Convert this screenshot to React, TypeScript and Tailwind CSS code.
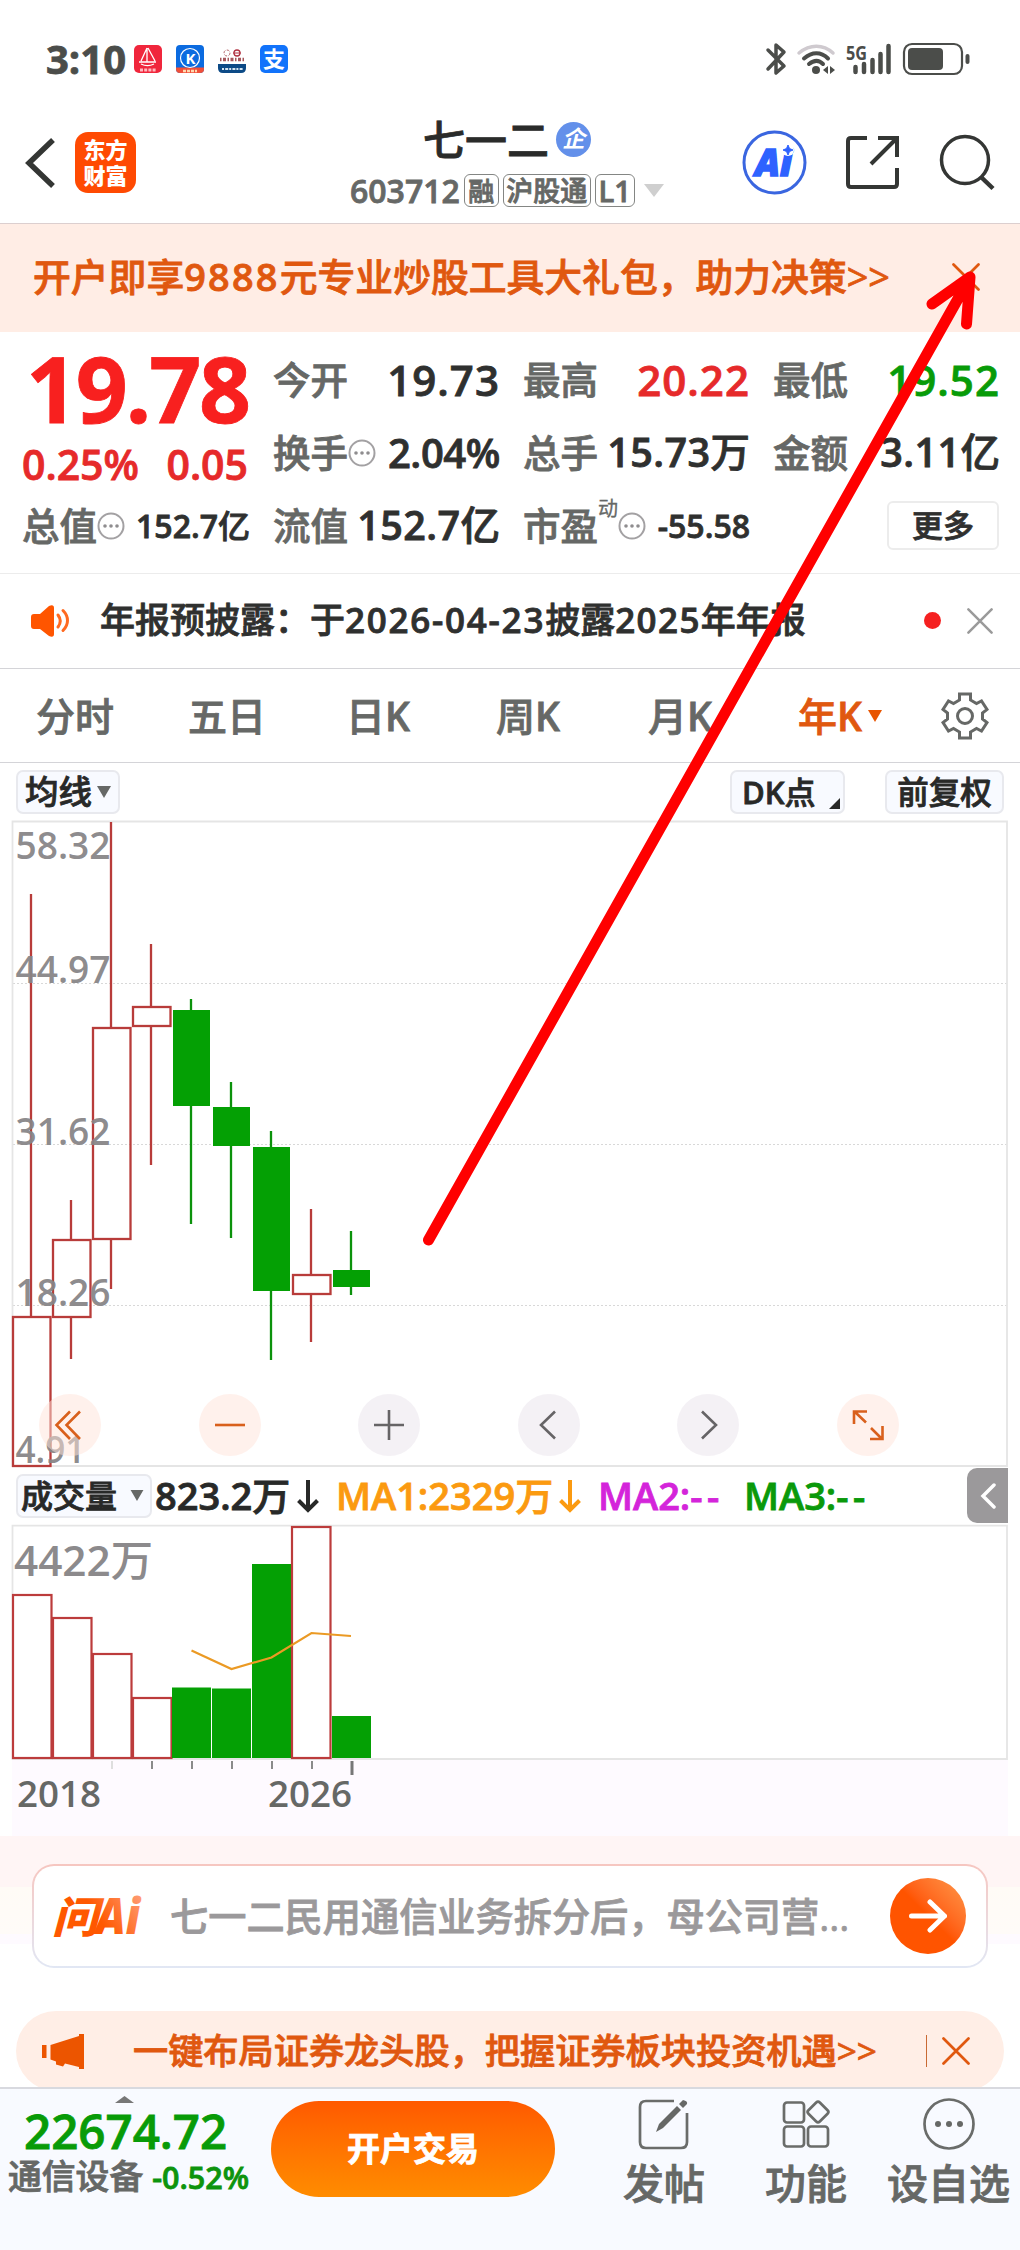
import type { ReactNode } from "react";

const candles = [
    { x: 13, high: 894, top: 1317, bottom: 1466, low: 1466, up: true },
    { x: 53, high: 1200, top: 1240, bottom: 1317, low: 1359, up: true },
    { x: 93, high: 822, top: 1028, bottom: 1239, low: 1289, up: true },
    { x: 133, high: 944, top: 1007, bottom: 1026, low: 1165, up: true },
    { x: 173, high: 999, top: 1010, bottom: 1106, low: 1224, up: false },
    { x: 213, high: 1082, top: 1107, bottom: 1146, low: 1238, up: false },
    { x: 253, high: 1131, top: 1147, bottom: 1291, low: 1360, up: false },
    { x: 293, high: 1209, top: 1275, bottom: 1294, low: 1342, up: true },
    { x: 333, high: 1231, top: 1270, bottom: 1287, low: 1295, up: false },
];

const volumes = [
    { x: 13, top: 1595, up: true },
    { x: 53, top: 1618, up: true },
    { x: 93, top: 1654, up: true },
    { x: 133, top: 1698, up: true },
    { x: 172, top: 1687.5, up: false },
    { x: 212, top: 1688.5, up: false },
    { x: 252, top: 1564, up: false },
    { x: 292, top: 1527, up: true },
    { x: 332, top: 1716, up: false },
];

const prices = [
    { label: "58.32", y: 859, w: 95 },
    { label: "44.97", y: 983, w: 95 },
    { label: "31.62", y: 1145, w: 95 },
    { label: "18.26", y: 1306, w: 95 },
    { label: "4.91", y: 1463, w: 70 },
];

const Close = ({ className }: { className: string }) => (
    <svg viewBox="0 0 28 28" className={className} fill="none" stroke="currentColor" strokeWidth="2.7" strokeLinecap="round">
        <path d="M1.5 1.5 26.5 26.5M26.5 1.5 1.5 26.5" />
    </svg>
);

const Info = () => (
    <svg viewBox="0 0 28 28" className="w-7 h-7 shrink-0" fill="none" stroke="#a3a1a3" strokeWidth="2">
        <circle cx="14" cy="14" r="12.5" />
        <g fill="#8f8d8f" stroke="none">
            <circle cx="8" cy="14" r="1.8" />
            <circle cx="14" cy="14" r="1.8" />
            <circle cx="20" cy="14" r="1.8" />
        </g>
    </svg>
);

const DownArrow = ({ className }: { className: string }) => (
    <svg viewBox="0 0 22 34" className={className} fill="none" stroke="currentColor" strokeWidth="4">
        <path d="M11 1V31M1.5 21.5 11 31l9.5-9.5" />
    </svg>
);

function StatusBar() {
    return (
        <div className="flex h-[90px] items-center pt-[28px] pl-[46px] pr-[45px] text-[#4b4d4a]">
            <span className="w-[88px] text-[40px] font-bold leading-none">3:10</span>
            <div className="flex gap-[14px]">
                <svg viewBox="0 0 28 28" className="w-7 h-7">
                    <rect width="28" height="28" rx="5" fill="#f0263c" />
                    <path d="M13 3v14M13 3 7 16M14 3l7 13M5 17h17M7 19c4 2 9 2 13 0" fill="none" stroke="#fff" strokeWidth="1.3" />
                    <path d="M6 25h16" stroke="#ffb9bf" strokeWidth="3" strokeDasharray="3 1.2" />
                </svg>
                <svg viewBox="0 0 28 28" className="w-7 h-7">
                    <rect width="28" height="28" rx="4" fill="#0b6be0" />
                    <path d="M0 22.5h28V24q0 4-4 4H4q-4 0-4-4z" fill="#f0503a" />
                    <circle cx="14" cy="13" r="9.5" fill="none" stroke="#fff" strokeWidth="1.2" />
                    <text x="14.500" y="18.500" fontSize="15" fontWeight="700" textAnchor="middle" fill="#fff">K</text>
                    <path d="M7 26h14" stroke="#ffd9b0" strokeWidth="2.5" strokeDasharray="3 1" />
                </svg>
                <svg viewBox="0 0 28 28" className="w-7 h-7">
                    <path d="M0 19h28v4q0 5-5 5H5q-5 0-5-5z" fill="#0c4a86" />
                    <path d="M4 24h21" stroke="#d5e4f0" strokeWidth="2.2" strokeDasharray="2 1.2 3 1" />
                    <path d="M2 14.500h25" stroke="#a5565b" strokeWidth="3.5" strokeDasharray="1.5 1.500 3 1.500" />
                    <circle cx="9" cy="8" r="3" fill="none" stroke="#b4666b" strokeDasharray="3 1.5" />
                    <circle cx="19" cy="8" r="3" fill="none" stroke="#b03040" strokeWidth="1.3" />
                    <path d="M15 8h8" stroke="#b03040" />
                </svg>
                <span className="w-7 h-7 rounded-[5px] bg-[#1273fb] text-white text-[22px] font-bold leading-[27px] text-center [-webkit-text-stroke:0]">支</span>
            </div>
            <svg viewBox="765 42 210 34" className="ml-auto w-[210px] h-[34px] overflow-visible" fill="none" stroke="#4b4d4a">
                <path d="m768 50 16 16-8 7V45l8 7-16 17" strokeWidth="3.5" strokeLinejoin="round" strokeLinecap="round" />
                <path d="M799 53c11-9 24-9 34 0" stroke="#cfcacf" strokeWidth="3.5" strokeLinecap="round" />
                <path d="M804 58.5c8-7 17-7 24 0M809 64c5-4 10-4 14 0" strokeWidth="4" strokeLinecap="round" />
                <circle cx="816" cy="70" r="4" fill="#4b4d4a" stroke="none" />
                <path d="m828 66-5 4 5 4zM830 66l5 4-5 4z" fill="#4b4d4a" stroke="none" />
                <text x="846" y="59.5" fontSize="20" fontWeight="700" textLength="21" lengthAdjust="spacingAndGlyphs" fill="#4b4d4a" stroke="none">5G</text>
                <path d="M855.500 67v5M864 64v8M872.5 60v12M880.5 54v18M888.5 46v26" strokeWidth="4.5" strokeLinecap="round" />
                <rect x="904" y="44" width="58" height="30" rx="8" strokeWidth="2.2" />
                <rect x="908" y="48" width="35" height="22" rx="4" fill="#4b4d4a" stroke="none" />
                <path d="M967.5 56v6" strokeWidth="4" strokeLinecap="round" />
            </svg>
        </div>
    );
}

function Header() {
    return (
        <header className="flex h-[134px] items-center border-b border-[#dccfcf] pl-[24px] pr-[26px] text-[#2a2b2a]">
            <div className="flex w-[326px] items-center gap-[19px] pt-[12px]">
                <svg viewBox="0 0 32 52" className="w-8 h-[52px]" fill="none" stroke="#343634" strokeWidth="5.5">
                    <path d="M29 3 5 26l24 23" />
                </svg>
                <div className="w-[61px] h-[61px] rounded-[13px] bg-[#ff4a02] text-white text-[22px] font-black leading-[26px] text-center pt-[4px] [-webkit-text-stroke:0]">
                    东方
                    <br />
                    财富
                </div>
            </div>
            <div className="flex flex-col items-center pt-[18px]">
                <div className="flex h-[50px] items-center gap-[7px]">
                    <h1 className="pt-[1px] text-[42px] font-medium leading-none">七一二</h1>
                    <span className="w-[35px] h-[35px] rounded-full bg-[#6390ea] text-white text-[23px] font-bold italic leading-[33px] text-center [-webkit-text-stroke:0]">企</span>
                </div>
                <div className="flex h-[52px] items-center text-[#666866] text-[26px] font-medium leading-none">
                    <span className="mr-[4px] text-[32px] font-semibold">603712</span>
                    <span className="mr-[4px] flex h-[33px] w-[35px] items-center justify-center rounded-[6px] border border-[#848684]">融</span>
                    <span className="mr-[4px] flex h-[33px] w-[88px] items-center justify-center rounded-[6px] border border-[#848684] text-[27px]">沪股通</span>
                    <span className="flex h-[33px] w-[40px] items-center justify-center rounded-[6px] border border-[#848684] text-[29px] font-semibold">L1</span>
                    <svg viewBox="0 0 20 13" className="ml-[9px] w-5 h-[13px]">
                        <path d="M0 0h20L10 13z" fill="#cfcfcf" />
                    </svg>
                </div>
            </div>
            <svg viewBox="742 130 252 66" className="ml-auto w-[252px] h-[66px] mt-[12px] overflow-visible" fill="none" stroke="#343634" strokeWidth="4">
                <circle cx="774.5" cy="162.5" r="30.5" stroke="#3a66e0" strokeWidth="3" />
                <text x="755" y="175.500" fontSize="37" fontWeight="800" fontStyle="italic" textLength="37" lengthAdjust="spacingAndGlyphs" fill="#2e62ff" stroke="#2e62ff" strokeWidth="1.500">Ai</text>
                <circle cx="788" cy="150" r="6" fill="#fff" stroke="none" />
                <path d="m788 145 1.5 3.5L793 150l-3.5 1.5L788 155l-1.5-3.5L783 150l3.5-1.5z" fill="#2e62ff" stroke="#2e62ff" strokeWidth="1" />
                <path d="M867 138h-16q-3 0-3 3v43q0 3 3 3h43q3 0 3-3v-16M878 138h19v19M897 138l-26 26" />
                <circle cx="965" cy="160" r="23.5" strokeWidth="3.5" />
                <path d="m981 177 12 11.5" strokeWidth="4.5" />
            </svg>
        </header>
    );
}

type StatProps = { label: string; value: string; unit?: string; color?: string; info?: boolean; sup?: string; size?: string };

function Stat({ label, value, unit, color = "text-[#2f302f]", info, sup, size = "text-[42px] tracking-[0.025em]" }: StatProps) {
    return (
        <div className="flex items-center whitespace-nowrap">
            <span className="text-[37.5px] font-medium text-[#666866]">{label}</span>
            {sup && <span className="relative -top-[17px] text-[20px] text-[#666866] [-webkit-text-stroke:0.3px]">{sup}</span>}
            {info && <Info />}
            <span className={`ml-auto -mr-[2px] font-semibold ${color} ${size}`}>
                {value}
                {unit && <span className="font-medium tracking-normal">{unit}</span>}
            </span>
        </div>
    );
}

function Quote() {
    const mid = "text-[39.5px] tracking-[0.01em]";
    const small = "text-[32px]";
    return (
        <section className="grid h-[242px] grid-cols-[226px_225px_225px_225px] grid-rows-[73px_73px_73px] gap-x-[25px] border-b border-[#ececec] pl-[22px] pt-[11px] leading-none">
            <div className="row-span-2 text-[#f8201f]">
                <div className="-mt-[3px] h-[96px] pl-[4px] text-[91px] font-bold leading-[96px] tracking-[-0.025em]">19.78</div>
                <div className="flex h-[56px] items-center justify-between text-[41px] font-semibold text-[#e62a2a]">
                    <span>0.25%</span>
                    <span>0.05</span>
                </div>
            </div>
            <Stat label="今开" value="19.73" />
            <Stat label="最高" value="20.22" color="text-[#e62a2a]" />
            <Stat label="最低" value="19.52" color="text-[#089b08]" />
            <Stat label="换手" value="2.04%" info size="text-[40px] tracking-[-0.01em]" />
            <Stat label="总手" value="15.73" unit="万" size={mid} />
            <Stat label="金额" value="3.11" unit="亿" size={mid} />
            <Stat label="总值" value="152.7" unit="亿" info size={small} />
            <Stat label="流值" value="152.7" unit="亿" size={mid} />
            <Stat label="市盈" sup="动" value="-55.58" info size={small} />
            <button className="-mr-[1px] h-[49px] w-[112px] self-center justify-self-end rounded-[6px] border-2 border-[#ececec] text-[31px] font-medium text-[#2f302f]">更多</button>
        </section>
    );
}

function Notice() {
    return (
        <section className="flex h-[95px] items-center border-b border-[#d4d4d8] pl-[29px] pr-[27px] pb-[1px]">
            <svg viewBox="0 0 42 34" className="mr-[29px] w-[42px] h-[34px]" fill="none" stroke="#ff6a20" strokeWidth="3" strokeLinecap="round">
                <path d="M2 13q0-3 3-3h6l9-8q5-2 5 2v26q0 4-5 2l-9-7H5q-3 0-3-3z" fill="#ff5500" stroke="none" />
                <path d="M29 11c3 4 3 8 0 12M34 6.5c6 6 6 14 0 20" />
            </svg>
            <p className="whitespace-nowrap pb-[2px] text-[35px] font-medium leading-none text-[#2f302f]">
                年报预披露：于<span className="font-semibold tracking-[0.05em]">2026-04-23</span>披露<span className="font-semibold tracking-[0.04em]">2025</span>年年报
            </p>
            <span className="ml-auto mr-[26px] w-[17px] h-[17px] rounded-full bg-[#f52020]" />
            <Close className="w-[26px] h-[26px] text-[#9a9a9a]" />
        </section>
    );
}

function Tabs() {
    return (
        <nav className="flex h-[94px] items-center border-b border-[#d4d4d8] pl-[36px] text-[39px] font-medium leading-none text-[#666866]">
            <span className="w-[152px]">分时</span>
            <span className="w-[158px]">五日</span>
            <span className="w-[150px]">日<b className="font-semibold">K</b></span>
            <span className="w-[152px]">周<b className="font-semibold">K</b></span>
            <span className="w-[150px]">月<b className="font-semibold">K</b></span>
            <span className="flex w-[143px] items-center text-[#e0580f]">
                年<b className="mr-[6px] font-semibold">K</b>
                <svg viewBox="0 0 14 12" className="w-[14px] h-3">
                    <path d="M0 0h14L7 12z" fill="#e85500" />
                </svg>
            </span>
            <svg viewBox="0 0 48 48" className="w-12 h-12" fill="none" stroke="#666866" strokeWidth="3">
                <path d="M18.5 2h11v6l6 3.500 5-2.500 5.500 8.500-4.500 3.500v6l4.500 3.500-5.500 8.500-5-2.500-6 3.500v6h-11v-6l-6-3.500-5 2.500L2 30.500 6.500 27v-6L2 17.500 7.500 9l5 2.500 6-3.500z" />
                <circle cx="24" cy="24" r="7.500" />
            </svg>
        </nav>
    );
}

const Chip = ({ className, children }: { className: string; children: ReactNode }) => (
    <button className={`flex h-[44px] items-center rounded-[7px] border-2 border-[#e8e9ee] bg-[#f8faff] font-medium leading-none text-[#282928] ${className}`}>{children}</button>
);

function PriceChart() {
    return (
        <section>
            <div className="flex h-[57px] items-center pl-4 pr-[16px] pt-[1px]">
                <Chip className="w-[104px] gap-[5px] pl-[7px] text-[33.5px]">
                    均线
                    <svg viewBox="0 0 14 12" className="w-[14px] h-3">
                        <path d="M0 0h14L7 12z" fill="#666866" />
                    </svg>
                </Chip>
                <Chip className="ml-auto w-[115px] justify-between pl-[10px] pr-[3px] text-[31px]">
                    <span>
                        <b className="font-semibold">DK</b>点
                    </span>
                    <svg viewBox="0 0 11 11" className="mt-[22px] w-[11px] h-[11px]">
                        <path d="M11 0v11H0z" fill="#282928" />
                    </svg>
                </Chip>
                <Chip className="ml-[40px] w-[119px] justify-center text-[31.5px]">前复权</Chip>
            </div>
            <div className="relative h-[648px]">
                <svg viewBox="0 820 1020 648" className="block h-[648px] w-[1020px] overflow-visible">
                    <g stroke="#d8d8d8" strokeDasharray="2 2">
                        <path d="M13 983.5H1007M13 1144.5H1007M13 1305.5H1007" />
                    </g>
                    <path d="M12.5 821.5V1466H1007V821.5z" fill="none" stroke="#e5e5e5" strokeWidth="1.8" />
                    {candles.map((c) => (
                        <g key={c.x} stroke={c.up ? "#b83c3a" : "#0b920b"} strokeWidth="2.3">
                            <path d={`M${c.x + 18} ${c.high}V${c.top}M${c.x + 18} ${c.bottom}V${c.low}`} />
                            {c.up ? (
                                <rect x={c.x} y={c.top} width="37.5" height={c.bottom - c.top} fill="none" />
                            ) : (
                                <rect x={c.x} y={c.top} width="37" height={c.bottom - c.top} fill="#04a004" stroke="none" />
                            )}
                        </g>
                    ))}
                    <g fill="#878587" fillOpacity="0.94" fontSize="38.5" fontWeight="600">
                        {prices.map((p) => (
                            <text key={p.label} x="15.5" y={p.y} textLength={p.w} lengthAdjust="spacingAndGlyphs">{p.label}</text>
                        ))}
                    </g>
                </svg>
                <div className="absolute left-[39px] right-[121px] top-[574px] flex justify-between">
                    <Control tone="warm" d="M31 17.5 17.5 31 31 45M41 17.5 27.5 31 41 45" />
                    <Control tone="warm" d="M16 31h30" />
                    <Control tone="cool" d="M16 31h30M31 16v30" />
                    <Control tone="cool" d="M37 17.5 23 31l14 13.5" />
                    <Control tone="cool" d="m25 17.5 14 13.5-14 13.5" />
                    <Control tone="warm" d="M17 30V17.5h13M17.5 17.5 29 28.5M34 34l11 11M33 45h12.5V32" />
                </div>
            </div>
        </section>
    );
}

function Control({ tone, d }: { tone: "warm" | "cool"; d: string }) {
    return (
        <button className={`w-[62px] h-[62px] rounded-full ${tone === "warm" ? "bg-[#ffe4d9]/50 text-[#d9601c]" : "bg-[#f0ebf1]/70 text-[#666466]"}`}>
            <svg viewBox="0 0 62 62" className="w-full h-full" fill="none" stroke="currentColor" strokeWidth="2.6">
                <path d={d} />
            </svg>
        </button>
    );
}

function VolumeChart() {
    return (
        <section>
            <div className="flex h-[56px] items-center whitespace-nowrap pl-4 pr-[12px] pb-[1px] text-[38px] font-semibold leading-none">
                <Chip className="w-[136px] gap-[13px] pl-[3px] text-[32px]">
                    成交量
                    <svg viewBox="0 0 14 12" className="w-[14px] h-[11px]">
                        <path d="M0 0h14L7 12z" fill="#666866" />
                    </svg>
                </Chip>
                <span className="ml-[3px] w-[142px] pb-[2px] text-[#282928]">
                    823.2<span className="font-medium">万</span>
                </span>
                <DownArrow className="w-[22px] h-[34px] text-[#282928]" />
                <span className="ml-[17px] w-[223px] pb-[2px] text-[#fb9a10]">
                    MA1:2329<span className="font-medium">万</span>
                </span>
                <DownArrow className="w-[22px] h-[34px] text-[#fb9a10]" />
                <span className="ml-[17px] w-[146px] pb-[2px] text-[#d424da]">
                    MA2:<span className="tracking-[0.12em]">--</span>
                </span>
                <span className="pb-[2px] text-[#0a990a]">
                    MA3:<span className="tracking-[0.12em]">--</span>
                </span>
                <span className="ml-auto flex h-[55px] w-[41px] items-center justify-center rounded-l-[10px] bg-[#9b999b]">
                    <svg viewBox="0 0 16 26" className="w-4 h-[26px]" fill="none" stroke="#fff" strokeWidth="3.5" strokeLinecap="round">
                        <path d="M14 2 3 13l11 11" />
                    </svg>
                </span>
            </div>
            <svg viewBox="0 1524 1020 312" className="block h-[312px] w-[1020px]">
                <rect x="12" y="1760" width="996" height="76" fill="#fefaff" />
                <path d="M12.5 1525.7V1759H1007V1525.7z" fill="none" stroke="#e5e5e5" strokeWidth="1.8" />
                {volumes.map((v) =>
                    v.up ? (
                        <rect key={v.x} x={v.x} y={v.top} width="38.5" height={1758 - v.top} fill="none" stroke="#bc3c3c" strokeWidth="2.2" />
                    ) : (
                        <rect key={v.x} x={v.x} y={v.top} width="39" height={1758 - v.top} fill="#04a004" />
                    )
                )}
                <path d="m191.5 1650.5 40 18.5 40-11.5 40-24.5 39.5 3" fill="none" stroke="#eb9a24" strokeWidth="2.2" />
                <text x="14" y="1576" fontSize="42" fontWeight="600" textLength="139" lengthAdjust="spacingAndGlyphs" fill="#8c8a8c">
                    4422<tspan fontWeight="500">万</tspan>
                </text>
                <path d="M112 1761v8" stroke="#dedede" strokeWidth="2" />
                <path d="M152 1761v8M192 1761v8M232 1761v8M272 1761v8M312 1761v8" stroke="#8a8a8a" strokeWidth="2" />
                <path d="M352 1761v14" stroke="#777" strokeWidth="3" />
                <g fill="#666866" fontSize="36" fontWeight="600">
                    <text x="17" y="1807" textLength="84" lengthAdjust="spacingAndGlyphs">2018</text>
                    <text x="268" y="1807" textLength="84" lengthAdjust="spacingAndGlyphs">2026</text>
                </g>
            </svg>
        </section>
    );
}

function AskAi() {
    return (
        <section className="h-[175px] bg-[linear-gradient(#fff5f5_51px,#fffbf6_51px,#fffbf8_98px,#fefaff_98px,#fefaff_108px,#fff_108px)] px-[32px] pt-[28px]">
            <div className="h-[104px] rounded-[22px] bg-linear-to-b from-[#f6c6c0] to-[#e1e7f4] p-[2px]">
                <div className="flex h-full items-center rounded-[20px] bg-white pl-[19px] pr-[20px]">
                    <svg viewBox="0 0 90 42" className="w-[90px] h-[42px] overflow-visible">
                        <defs>
                            <linearGradient id="ask" gradientUnits="userSpaceOnUse" x1="30" y1="42" x2="96" y2="0">
                                <stop offset="0.3" stopColor="#ff5800" />
                                <stop offset="1" stopColor="#ffa685" />
                            </linearGradient>
                        </defs>
                        <g fill="url(#ask)" fontWeight="800" fontStyle="italic">
                            <text x="-1" y="37.5" fontSize="43" textLength="46" lengthAdjust="spacingAndGlyphs">问</text>
                            <text x="43" y="39" fontSize="49" textLength="44" lengthAdjust="spacingAndGlyphs">Ai</text>
                        </g>
                    </svg>
                    <span className="ml-[27px] whitespace-nowrap text-[38.200px] font-medium leading-none text-[#9b999b]">七一二民用通信业务拆分后，母公司营...</span>
                    <span className="ml-auto flex w-[76px] h-[76px] shrink-0 items-center justify-center rounded-full bg-linear-to-tr from-[#ff5400] from-50% to-[#ff9848]">
                        <svg viewBox="0 0 38 34" className="w-[38px] h-[34px]" fill="none" stroke="#fff" strokeWidth="5" strokeLinecap="round" strokeLinejoin="round">
                            <path d="M2.5 17h33M21 3l14.5 14L21 31" />
                        </svg>
                    </span>
                </div>
            </div>
        </section>
    );
}

function Promo() {
    return (
        <section className="h-[76px] overflow-hidden px-4">
            <div className="flex h-[80px] items-center rounded-[40px] bg-[#ffeee6] pl-[26px] pr-[34px] text-[#e0580f]">
                <svg viewBox="0 0 42 36" className="mr-[49px] w-[42px] h-[36px] shrink-0" fill="#ec5500">
                    <path d="M0 12h4.5v13H0zM8.5 12 37 3V1h5v35h-5v-2l-14-3.5-2 3-7-2v-3l-5.5-2z" />
                </svg>
                <span className="whitespace-nowrap text-[35.2px] font-medium leading-none">一键布局证券龙头股，把握证券板块投资机遇&gt;&gt;</span>
                <span className="ml-auto mr-[15px] h-[32px] w-[1.5px] bg-[#c96a34]" />
                <Close className="w-7 h-7 shrink-0" />
            </div>
        </section>
    );
}

function Action({ label, children }: { label: string; children: ReactNode }) {
    return (
        <button className="flex flex-col items-center whitespace-nowrap text-[41px] font-medium leading-none">
            <svg viewBox="0 0 52 52" className="mb-[13px] w-[52px] h-[52px]" fill="none" stroke="#6a6c6a" strokeWidth="2.7">{children}</svg>
            {label}
        </button>
    );
}

function BottomBar() {
    return (
        <footer className="flex h-[163px] border-t-2 border-[#d8d9df] bg-[#f8faff] text-[#666866]">
            <div className="flex w-[271px] flex-col pt-[7px]">
                <svg viewBox="0 0 19 7" className="ml-[115px] h-[7px] w-[19px]">
                    <path d="M0 7 9.5 0 19 7z" fill="#777" />
                </svg>
                <span className="ml-[24px] mt-[1px] h-[54px] text-[47.5px] font-semibold leading-[54px] text-[#089b08]">22674.72</span>
                <span className="ml-[8px] flex h-[38px] items-center whitespace-nowrap text-[33.8px] font-medium leading-none">
                    通信设备
                    <b className="ml-[9px] text-[30.5px] font-semibold text-[#0d940d]">-0.52%</b>
                </span>
            </div>
            <button className="mt-[12px] h-[96px] w-[284px] rounded-full bg-linear-to-b from-[#ff5900] to-[#ff8c00] text-[33px] font-bold text-white">开户交易</button>
            <div className="ml-[68px] flex gap-[60px] pt-[9px]">
                <Action label="发帖">
                    <path d="M36 3H8q-6 0-6 6v35q0 6 6 6h35q6 0 6-6V15" />
                    <path d="m18 34 3-8L39 8l4 4-18 18zM41 6l4-4q5 1 4 4l-4 4z" fill="#666866" stroke="none" />
                </Action>
                <Action label="功能">
                    <rect x="4" y="4.5" width="20" height="20" rx="3" />
                    <rect x="4" y="28.5" width="20" height="20" rx="3" />
                    <rect x="28" y="28.5" width="20" height="20" rx="3" />
                    <rect x="30" y="6" width="16" height="16" rx="2.5" transform="rotate(45 38 14)" />
                </Action>
                <div className="-ml-[20px]">
                    <Action label="设自选">
                        <circle cx="26" cy="26" r="24.5" />
                        <g fill="#666866" stroke="none">
                            <circle cx="15" cy="26" r="3" />
                            <circle cx="26" cy="26" r="3" />
                            <circle cx="37" cy="26" r="3" />
                        </g>
                    </Action>
                </div>
            </div>
        </footer>
    );
}

export default function App() {
    return (
        <main className="relative h-[2250px] w-[1020px] overflow-hidden bg-white font-['Open_Sans','Noto_Sans_CJK_SC',sans-serif] [-webkit-text-stroke:0.8px]">
            <StatusBar />
            <Header />
            <section className="flex h-[108px] items-center justify-between bg-[#ffede5] pl-[33px] pr-[40px] pb-[2px] text-[#e0580f]">
                <span className="whitespace-nowrap text-[37.8px] font-medium leading-none">
                    开户即享<span className="font-semibold tracking-[0.06em]">9888</span>元专业炒股工具大礼包，助力决策&gt;&gt;
                </span>
                <Close className="w-7 h-7 shrink-0" />
            </section>
            <Quote />
            <Notice />
            <Tabs />
            <PriceChart />
            <VolumeChart />
            <AskAi />
            <Promo />
            <BottomBar />
            {/* red pointer drawn from the chart up to the banner's close button */}
            <svg viewBox="0 0 1020 2250" className="pointer-events-none absolute inset-0 h-full w-full" fill="none" stroke="#f00" strokeWidth="11" strokeLinecap="round" strokeLinejoin="round">
                <path d="M428.5 1240 968 281M932 304l38-27-3.5 47" />
            </svg>
        </main>
    );
}
